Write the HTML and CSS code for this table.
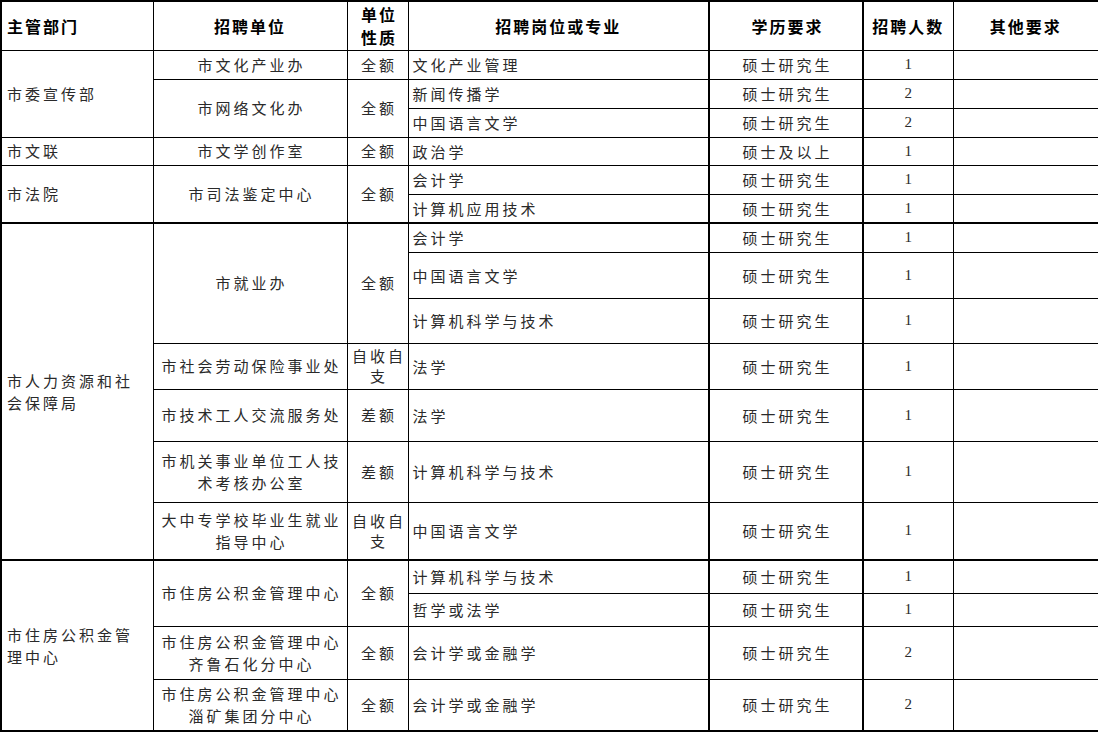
FILE: index.html
```html
<!DOCTYPE html>
<html lang="zh-CN">
<head>
<meta charset="utf-8">
<title>招聘计划</title>
<link rel="stylesheet" href="styles.css">
</head>
<body>
<table class="grid">
  <colgroup>
    <col class="w-dept"><col class="w-unit"><col class="w-nat"><col class="w-major"><col class="w-edu"><col class="w-num"><col class="w-other">
  </colgroup>
  <thead>
    <tr class="head">
      <th class="dept">主管部门</th><th>招聘单位</th><th class="nat">单位<br>性质</th><th>招聘岗位或专业</th><th class="edu">学历要求</th><th>招聘人数</th><th>其他要求</th>
    </tr>
  </thead>
  <tbody>
    <tr class="r29"><td class="dept" rowspan="3">市委宣传部</td><td class="unit">市文化产业办</td><td class="nat">全额</td><td class="major">文化产业管理</td><td class="edu">硕士研究生</td><td class="num">1</td><td></td></tr>
    <tr class="r29"><td class="unit" rowspan="2">市网络文化办</td><td class="nat" rowspan="2">全额</td><td class="major">新闻传播学</td><td class="edu">硕士研究生</td><td class="num">2</td><td></td></tr>
    <tr class="r29"><td class="major">中国语言文学</td><td class="edu">硕士研究生</td><td class="num">2</td><td></td></tr>
    <tr class="r28"><td class="dept">市文联</td><td class="unit">市文学创作室</td><td class="nat">全额</td><td class="major">政治学</td><td class="edu">硕士及以上</td><td class="num">1</td><td></td></tr>
    <tr class="r29"><td class="dept" rowspan="2">市法院</td><td class="unit" rowspan="2">市司法鉴定中心</td><td class="nat" rowspan="2">全额</td><td class="major">会计学</td><td class="edu">硕士研究生</td><td class="num">1</td><td></td></tr>
    <tr class="r29"><td class="major">计算机应用技术</td><td class="edu">硕士研究生</td><td class="num">1</td><td></td></tr>
    <tr class="r29 sep"><td class="dept" rowspan="7">市人力资源和社<br>会保障局</td><td class="unit" rowspan="3">市就业办</td><td class="nat" rowspan="3">全额</td><td class="major">会计学</td><td class="edu">硕士研究生</td><td class="num">1</td><td></td></tr>
    <tr class="r46"><td class="major">中国语言文学</td><td class="edu">硕士研究生</td><td class="num">1</td><td></td></tr>
    <tr class="r45"><td class="major">计算机科学与技术</td><td class="edu">硕士研究生</td><td class="num">1</td><td></td></tr>
    <tr class="r46"><td class="unit">市社会劳动保险事业处</td><td class="nat">自收自<br>支</td><td class="major">法学</td><td class="edu">硕士研究生</td><td class="num">1</td><td></td></tr>
    <tr class="r52"><td class="unit">市技术工人交流服务处</td><td class="nat">差额</td><td class="major">法学</td><td class="edu">硕士研究生</td><td class="num">1</td><td></td></tr>
    <tr class="r61"><td class="unit">市机关事业单位工人技<br>术考核办公室</td><td class="nat">差额</td><td class="major">计算机科学与技术</td><td class="edu">硕士研究生</td><td class="num">1</td><td></td></tr>
    <tr class="r58"><td class="unit">大中专学校毕业生就业<br>指导中心</td><td class="nat">自收自<br>支</td><td class="major">中国语言文学</td><td class="edu">硕士研究生</td><td class="num">1</td><td></td></tr>
    <tr class="r33 sep"><td class="dept" rowspan="4">市住房公积金管<br>理中心</td><td class="unit" rowspan="2">市住房公积金管理中心</td><td class="nat" rowspan="2">全额</td><td class="major">计算机科学与技术</td><td class="edu">硕士研究生</td><td class="num">1</td><td></td></tr>
    <tr class="r33"><td class="major">哲学或法学</td><td class="edu">硕士研究生</td><td class="num">1</td><td></td></tr>
    <tr class="r53"><td class="unit">市住房公积金管理中心<br>齐鲁石化分中心</td><td class="nat">全额</td><td class="major">会计学或金融学</td><td class="edu">硕士研究生</td><td class="num">2</td><td></td></tr>
    <tr class="r52"><td class="unit">市住房公积金管理中心<br>淄矿集团分中心</td><td class="nat">全额</td><td class="major">会计学或金融学</td><td class="edu">硕士研究生</td><td class="num">2</td><td></td></tr>
  </tbody>
</table>
</body>
</html>
```

FILE: styles.css
```css
html, body {
  margin: 0;
  padding: 0;
  background: #ffffff;
}

body {
  font-family: "Noto Sans CJK SC", "Noto Sans", sans-serif;
  color: #2a2a2a;
}

.grid {
  width: 1098px;
  table-layout: fixed;
  border-collapse: collapse;
  border: 2px solid #000;
}

.w-dept { width: 152px; }
.w-unit { width: 194px; }
.w-nat { width: 61px; }
.w-major { width: 301px; }
.w-edu { width: 154px; }
.w-num { width: 90px; }
.w-other { width: 146px; }

.grid th,
.grid td {
  border: 1px solid #000;
  padding: 0 3px;
  vertical-align: middle;
  text-align: center;
  font-size: 15px;
  letter-spacing: 3px;
  line-height: 21px;
  overflow: hidden;
  white-space: nowrap;
}

.grid th {
  font-weight: 700;
  font-size: 16px;
  letter-spacing: 2px;
  color: #000;
}

.head { height: 49px; }
.head th { line-height: 22px; }
.head th.nat { line-height: 23px; }

.grid .dept {
  text-align: left;
  padding-left: 5px;
  line-height: 22px;
}

.grid .unit { line-height: 22px; padding-left: 6px; }

.grid .nat { line-height: 20px; padding: 0 1px 0 4px; }

.grid .major {
  text-align: left;
  padding-left: 4px;
}

.grid .edu {
  border-left: 2px solid #000;
  border-right: 2px solid #000;
  padding-left: 6px;
}

.grid .num {
  font-family: "Liberation Serif", serif;
  font-size: 15px;
  letter-spacing: 0;
}

.sep td { border-top: 2px solid #000; }

.r28 { height: 28px; }
.r29 { height: 29px; }
.r33 { height: 33px; }
.r45 { height: 45px; }
.r46 { height: 46px; }
.r52 { height: 52px; }
.r53 { height: 53px; }
.r58 { height: 58px; }
.r61 { height: 61px; }
```
